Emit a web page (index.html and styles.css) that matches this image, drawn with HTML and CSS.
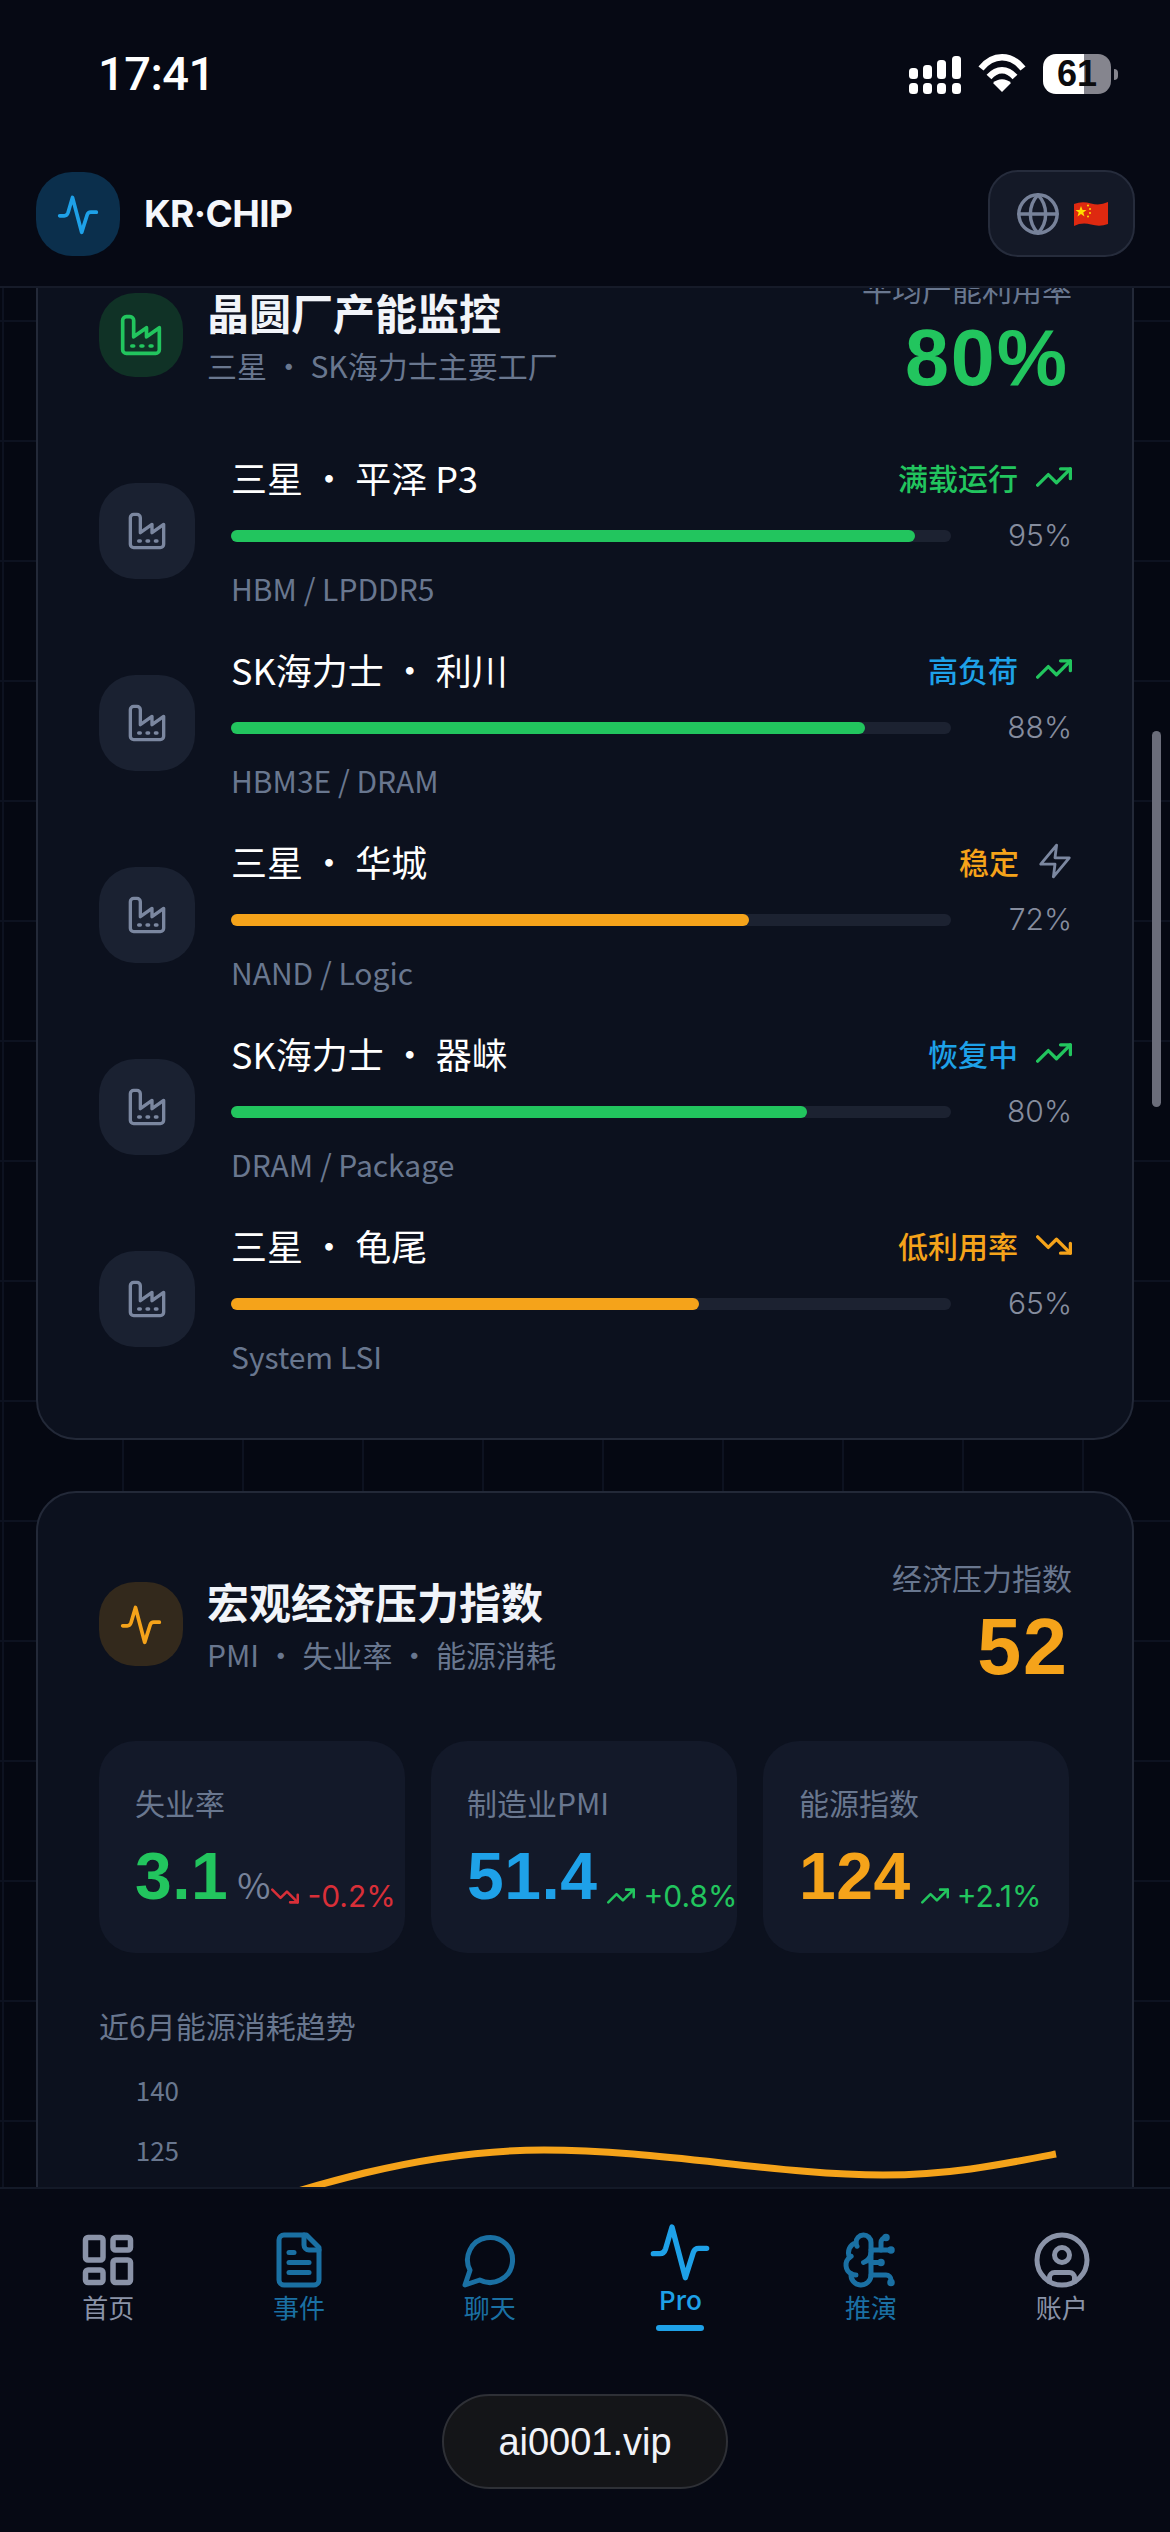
FILE: index.html
```html
<!DOCTYPE html>
<html lang="zh">
<head>
<meta charset="utf-8">
<title>KR·CHIP</title>
<link rel="stylesheet" href="styles.css">
</head>
<body>
<svg class="defs" width="0" height="0" aria-hidden="true">
  <symbol id="i-pulse" viewBox="0 0 24 24"><path d="M2 13h2.5c1 0 1.7-.6 2.1-1.8L9 3l5 19 3-9.5c.3-.9 1-1.5 2-1.5H22"/></symbol>
  <symbol id="i-factory" viewBox="0 0 24 24"><path d="M2 20a2 2 0 0 0 2 2h16a2 2 0 0 0 2-2V8l-7 5V8l-7 5V4a2 2 0 0 0-2-2H4a2 2 0 0 0-2 2Z"/><path d="M17 18h1"/><path d="M12 18h1"/><path d="M7 18h1"/></symbol>
  <symbol id="i-up" viewBox="1 6 22 12"><path d="M22 7 13.500 15.500l-5-5L2 17"/><path d="M16 7h6v6"/></symbol>
  <symbol id="i-down" viewBox="1 6 22 12"><path d="M22 17 13.500 8.500l-5 5L2 7"/><path d="M16 17h6v-6"/></symbol>
  <symbol id="i-zap" viewBox="0 0 24 24"><path d="M13 2 3 14h9l-1 8 10-12h-9l1-8Z"/></symbol>
</svg>

<div class="top">
  <div class="status">
    <span class="clock">17:41</span>
    <div class="status-icons">
      <svg class="signal" width="52" height="38" viewBox="0 0 52 38"><g fill="#fff"><rect x="0" y="27" width="9" height="11" rx="3.500"/><rect x="14" y="27" width="9" height="11" rx="3.500"/><rect x="28" y="27" width="9" height="11" rx="3.500"/><rect x="43" y="27" width="9" height="11" rx="3.500"/><rect x="0" y="12" width="9" height="11" rx="3.500"/><rect x="14" y="9" width="9" height="14" rx="3.500"/><rect x="28" y="4" width="9" height="19" rx="3.500"/><rect x="43" y="0" width="9" height="23" rx="3.500"/></g></svg>
      <svg class="wifi" width="48" height="38" viewBox="0 0 48 38"><g fill="none" stroke="#fff" stroke-width="6.500"><path d="M3 14.500C15-.5 33-.5 45 14.500"/><path d="M11 23c8-9 18-9 26 0"/></g><path fill="#fff" d="M24 38 15 29c5-5 13-5 18 0Z"/></svg>
      <div class="battery"><span class="battery-level">61</span></div>
      <span class="battery-nub"></span>
    </div>
  </div>
  <header class="appbar">
    <div class="brand">
      <span class="logo"><svg class="ico ico-logo"><use href="#i-pulse"/></svg></span>
      <span class="brand-name">KR·CHIP</span>
    </div>
    <div class="lang">
      <svg class="ico ico-globe" viewBox="0 0 24 24"><circle cx="12" cy="12" r="10"/><path d="M12 2a14.500 14.500 0 0 0 0 20 14.500 14.500 0 0 0 0-20"/><path d="M2 12h20"/></svg>
      <svg class="flag" width="36" height="28" viewBox="0 0 36 28"><path fill="#de2910" d="M1 4Q9 1 18 3.500T35 2V24Q27 27 18 24.500T1 26Z"/><polygon fill="#ffde00" points="8,6 9.500,10 13.500,10 10.300,12.500 11.500,16.500 8,14 4.500,16.500 5.700,12.500 2.500,10 6.500,10"/><circle cx="15" cy="5.500" r="1" fill="#ffde00"/><circle cx="17" cy="9" r="1" fill="#ffde00"/><circle cx="17" cy="13" r="1" fill="#ffde00"/><circle cx="15" cy="16.500" r="1" fill="#ffde00"/></svg>
    </div>
  </header>
</div>

<main class="scroller">
  <div class="scroll-thumb"></div>
  <div class="scroll-content">
    <section class="card">
      <div class="card-head">
        <div class="head-left">
          <span class="head-icon head-icon-green"><svg class="ico ico-head"><use href="#i-factory"/></svg></span>
          <div>
            <h2 class="head-title">晶圆厂产能监控</h2>
            <p class="head-sub">三星 · SK海力士主要工厂</p>
          </div>
        </div>
        <div class="head-right">
          <p class="head-label">平均产能利用率</p>
          <p class="head-value c-green">80%</p>
        </div>
      </div>

      <div class="fab">
        <span class="fab-icon"><svg class="ico ico-fab"><use href="#i-factory"/></svg></span>
        <div class="fab-body">
          <div class="fab-top"><span class="fab-name">三星 · 平泽 P3</span><span class="fab-state c-green">满载运行<svg class="ico trend c-green"><use href="#i-up"/></svg></span></div>
          <div class="fab-bar"><div class="track"><div class="fill bg-green" style="width:95%"></div></div><span class="pct">95%</span></div>
          <p class="fab-sub">HBM / LPDDR5</p>
        </div>
      </div>
      <div class="fab">
        <span class="fab-icon"><svg class="ico ico-fab"><use href="#i-factory"/></svg></span>
        <div class="fab-body">
          <div class="fab-top"><span class="fab-name">SK海力士 · 利川</span><span class="fab-state c-blue">高负荷<svg class="ico trend c-green"><use href="#i-up"/></svg></span></div>
          <div class="fab-bar"><div class="track"><div class="fill bg-green" style="width:88%"></div></div><span class="pct">88%</span></div>
          <p class="fab-sub">HBM3E / DRAM</p>
        </div>
      </div>
      <div class="fab">
        <span class="fab-icon"><svg class="ico ico-fab"><use href="#i-factory"/></svg></span>
        <div class="fab-body">
          <div class="fab-top"><span class="fab-name">三星 · 华城</span><span class="fab-state c-orange">稳定<svg class="ico zap"><use href="#i-zap"/></svg></span></div>
          <div class="fab-bar"><div class="track"><div class="fill bg-orange" style="width:72%"></div></div><span class="pct">72%</span></div>
          <p class="fab-sub">NAND / Logic</p>
        </div>
      </div>
      <div class="fab">
        <span class="fab-icon"><svg class="ico ico-fab"><use href="#i-factory"/></svg></span>
        <div class="fab-body">
          <div class="fab-top"><span class="fab-name">SK海力士 · 器崃</span><span class="fab-state c-blue">恢复中<svg class="ico trend c-green"><use href="#i-up"/></svg></span></div>
          <div class="fab-bar"><div class="track"><div class="fill bg-green" style="width:80%"></div></div><span class="pct">80%</span></div>
          <p class="fab-sub">DRAM / Package</p>
        </div>
      </div>
      <div class="fab">
        <span class="fab-icon"><svg class="ico ico-fab"><use href="#i-factory"/></svg></span>
        <div class="fab-body">
          <div class="fab-top"><span class="fab-name">三星 · 龟尾</span><span class="fab-state c-orange">低利用率<svg class="ico trend c-orange"><use href="#i-down"/></svg></span></div>
          <div class="fab-bar"><div class="track"><div class="fill bg-orange" style="width:65%"></div></div><span class="pct">65%</span></div>
          <p class="fab-sub">System LSI</p>
        </div>
      </div>
    </section>

    <section class="card card-macro">
      <div class="card-head">
        <div class="head-left">
          <span class="head-icon head-icon-orange"><svg class="ico ico-head c-orange"><use href="#i-pulse"/></svg></span>
          <div>
            <h2 class="head-title">宏观经济压力指数</h2>
            <p class="head-sub">PMI · 失业率 · 能源消耗</p>
          </div>
        </div>
        <div class="head-right">
          <p class="head-label">经济压力指数</p>
          <p class="head-value c-orange">52</p>
        </div>
      </div>

      <div class="kpis">
        <div class="kpi">
          <p class="kpi-label">失业率</p>
          <div class="kpi-row">
            <span class="kpi-main"><span class="kpi-num c-green">3.1</span><span class="kpi-unit">%</span></span>
            <span class="kpi-delta c-red"><svg class="ico delta-ico"><use href="#i-down"/></svg>-0.2%</span>
          </div>
        </div>
        <div class="kpi">
          <p class="kpi-label">制造业PMI</p>
          <div class="kpi-row">
            <span class="kpi-main"><span class="kpi-num c-blue">51.4</span></span>
            <span class="kpi-delta c-green"><svg class="ico delta-ico"><use href="#i-up"/></svg>+0.8%</span>
          </div>
        </div>
        <div class="kpi">
          <p class="kpi-label">能源指数</p>
          <div class="kpi-row">
            <span class="kpi-main"><span class="kpi-num c-orange">124</span></span>
            <span class="kpi-delta c-green"><svg class="ico delta-ico"><use href="#i-up"/></svg>+2.1%</span>
          </div>
        </div>
      </div>

      <p class="chart-title">近6月能源消耗趋势</p>
      <svg class="chart" width="970" height="200" viewBox="0 0 970 200">
        <text class="axis" x="80" y="40" text-anchor="end">140</text>
        <text class="axis" x="80" y="100" text-anchor="end">125</text>
        <path class="line" d="M90 165C210 125 320 89 445 89C560 89 680 114 784 114C850 114 900 104 957 93"/>
      </svg>
    </section>
  </div>
</main>

<footer class="bottom">
  <nav class="tabs">
    <a class="tab tab-grey"><svg class="ico tab-ico" viewBox="0 0 24 24"><rect x="3" y="3" width="7" height="9" rx="1"/><rect x="14" y="3" width="7" height="5" rx="1"/><rect x="14" y="12" width="7" height="9" rx="1"/><rect x="3" y="16" width="7" height="5" rx="1"/></svg><span>首页</span></a>
    <a class="tab tab-dim"><svg class="ico tab-ico" viewBox="0 0 24 24"><path d="M15 2H6a2 2 0 0 0-2 2v16a2 2 0 0 0 2 2h12a2 2 0 0 0 2-2V7Z"/><path d="M14 2v4a2 2 0 0 0 2 2h4"/><path d="M10 9H8"/><path d="M16 13H8"/><path d="M16 17H8"/></svg><span>事件</span></a>
    <a class="tab tab-dim"><svg class="ico tab-ico" viewBox="0 0 24 24"><path d="M7.900 20A9 9 0 1 0 4 16.100L2 22Z"/></svg><span>聊天</span></a>
    <a class="tab tab-active"><svg class="ico tab-ico"><use href="#i-pulse"/></svg><span>Pro</span><i class="tab-mark"></i></a>
    <a class="tab tab-dim"><svg class="ico tab-ico" viewBox="0 0 24 24"><path d="M12 5a3 3 0 1 0-5.997.125 4 4 0 0 0-2.526 5.770 4 4 0 0 0 .556 6.588A4 4 0 1 0 12 18Z"/><path d="M9 13a4.500 4.500 0 0 0 3-4"/><path d="M6.003 5.125A3 3 0 0 0 6.401 6.500"/><path d="M3.477 10.896a4 4 0 0 1 .585-.396"/><path d="M6 18a4 4 0 0 1-1.967-.516"/><path d="M12 13h4"/><path d="M12 18h6a2 2 0 0 1 2 2v1"/><path d="M12 8h8"/><path d="M16 8V5a2 2 0 0 1 2-2"/><circle cx="16" cy="13" r=".5"/><circle cx="18" cy="3" r=".5"/><circle cx="20" cy="21" r=".5"/><circle cx="20" cy="8" r=".5"/></svg><span>推演</span></a>
    <a class="tab"><svg class="ico tab-ico" viewBox="0 0 24 24"><circle cx="12" cy="12" r="10"/><circle cx="12" cy="10" r="3"/><path d="M7 20.662V19a2 2 0 0 1 2-2h6a2 2 0 0 1 2 2v1.662"/></svg><span>账户</span></a>
  </nav>
  <div class="url-pill">ai0001.vip</div>
</footer>
</body>
</html>
```

FILE: styles.css
```css
* { box-sizing: border-box; }
html, body { margin: 0; padding: 0; }
body {
  width: 1170px;
  height: 2532px;
  overflow: hidden;
  display: flex;
  flex-direction: column;
  background: #050812;
  color: #f1f4f9;
  font-family: "Noto Sans CJK SC", "Noto Sans", sans-serif;
}
p, h2 { margin: 0; }
.defs { position: absolute; }
.ico { fill: none; stroke: currentColor; stroke-width: 2; stroke-linecap: round; stroke-linejoin: round; display: block; flex: none; }

.c-green { color: #22c55e; }
.c-blue { color: #1ea1e8; }
.c-orange { color: #f5a31a; }
.c-red { color: #d92f38; }
.bg-green { background: #22c55e; }
.bg-orange { background: #f5a31a; }

/* top */
.top {
  height: 288px;
  flex: none;
  background: #060914;
  border-bottom: 2px solid #161b29;
}
.status {
  height: 150px;
  padding: 44px 52px 0 98px;
  display: flex;
  justify-content: space-between;
  align-items: flex-start;
}
.clock {
  font: 500 47px/60px "Roboto", "Liberation Sans", sans-serif;
  color: #fff;
  letter-spacing: -.5px;
}
.status-icons { display: flex; align-items: flex-start; padding-top: 10px; }
.signal { margin-top: 2px; margin-right: 17px; }
.wifi { margin-right: 17px; }
.battery {
  width: 68px;
  height: 40px;
  border-radius: 13px;
  background: linear-gradient(90deg, #fff 60%, #85858e 60%);
  color: #0b0b0d;
  display: flex;
  align-items: center;
  justify-content: center;
}
.battery-level { font: 700 36px/40px "Liberation Sans", sans-serif; }
.battery-nub { width: 4px; height: 11px; margin: 15px 0 0 3px; border-radius: 0 4px 4px 0; background: #85858e; }

.appbar {
  height: 87px;
  margin-top: 20px;
  padding: 0 35px 0 36px;
  display: flex;
  justify-content: space-between;
  align-items: center;
}
.brand { display: flex; align-items: center; gap: 24px; }
.logo {
  width: 84px;
  height: 84px;
  border-radius: 36px;
  background: #0b2f4c;
  color: #1ea1e8;
  display: flex;
  align-items: center;
  justify-content: center;
}
.ico-logo { width: 44px; height: 44px; }
.brand-name { font: 700 37px/44px "Inter", "Liberation Sans", sans-serif; letter-spacing: -.6px; color: #f4f6fb; }
.lang {
  width: 147px;
  height: 87px;
  border-radius: 30px;
  background: #141927;
  border: 2px solid #262c3c;
  color: #77829a;
  display: flex;
  align-items: center;
  gap: 12px;
  padding-left: 25px;
}
.ico-globe { width: 46px; height: 46px; stroke-width: 1.800; }

/* scrolling region */
.scroller {
  flex: 1;
  min-height: 0;
  overflow: hidden;
  position: relative;
  background-color: #050812;
  background-image:
    linear-gradient(#0d1220 2px, transparent 2px),
    linear-gradient(90deg, #0d1220 2px, transparent 2px);
  background-size: 120px 120px;
  background-position: 2px 32px;
}
.scroll-thumb {
  position: absolute;
  left: 1152px;
  top: 443px;
  width: 9px;
  height: 376px;
  border-radius: 5px;
  background: #6b6d7a;
  z-index: 2;
}
.scroll-content {
  margin-top: -86px;
  padding: 0 36px;
  display: flex;
  flex-direction: column;
  gap: 51px;
}
.card {
  background: #0c111e;
  border: 2px solid #232938;
  border-radius: 40px;
  padding: 62px 60px 44px 61px;
}
.card-macro { padding-bottom: 0; }

.card-head { display: flex; justify-content: space-between; align-items: center; height: 138px; }
.head-left { display: flex; align-items: center; gap: 24px; }
.head-icon {
  width: 84px;
  height: 84px;
  border-radius: 36px;
  display: flex;
  align-items: center;
  justify-content: center;
}
.head-icon-green { background: #103226; color: #22c55e; }
.head-icon-orange { background: #33291c; }
.ico-head { width: 44px; height: 44px; }
.head-title { font-size: 42px; line-height: 52px; font-weight: 700; color: #f1f4f9; }
.head-sub { font-size: 30px; line-height: 40px; color: #69778f; margin-top: 7px; }
.head-right { text-align: right; }
.head-label { font-size: 30px; line-height: 40px; color: #69778f; margin-bottom: 6px; }
.head-value { font: 700 79px/88px "Liberation Sans", sans-serif; letter-spacing: 2px; margin-right: 3px; }

/* fab rows */
.fab { display: flex; align-items: center; gap: 36px; height: 192px; }
.card-head + .fab { margin-top: 30px; }
.fab-icon {
  width: 96px;
  height: 96px;
  flex: none;
  margin-top: 2px;
  border-radius: 36px;
  background: #1a2131;
  color: #7b87a0;
  display: flex;
  align-items: center;
  justify-content: center;
}
.ico-fab { width: 40px; height: 40px; }
.fab-body { flex: 1; min-width: 0; }
.fab-top { display: flex; justify-content: space-between; align-items: center; height: 48px; }
.fab-name { font-size: 36px; line-height: 48px; font-weight: 400; color: #fff; }
.fab-state { display: flex; align-items: center; gap: 18px; font-size: 30px; line-height: 48px; font-weight: 500; }
.trend { width: 36px; height: 20px; stroke-width: 2; }
.zap { width: 38px; height: 38px; color: #7b87a0; stroke-width: 1.800; margin: 0 -2px 0 -1px; }
.fab-bar { display: flex; align-items: center; height: 36px; margin-top: 17px; }
.track { width: 720px; height: 12px; border-radius: 6px; background: #1c2231; flex: none; }
.fill { height: 100%; border-radius: 6px; }
.pct { flex: 1; margin-top: -2px; text-align: right; font: 300 30px/36px "Inter", sans-serif; color: #868d9e; }
.fab-sub { font-size: 30px; line-height: 40px; color: #69778f; margin-top: 14px; }

/* KPI */
.kpis { display: grid; grid-template-columns: repeat(3, 306px); gap: 26px; margin-top: 48px; }
.kpi { height: 212px; padding: 41px 0 0 36px; border-radius: 36px; background: #131929; }
.kpi-label { font-size: 30px; line-height: 40px; color: #69778f; }
.kpi-row { display: flex; align-items: flex-end; margin-top: 19px; height: 70px; white-space: nowrap; }
.kpi-main { display: flex; align-items: baseline; }
.kpi-num { font: 700 66px/70px "Liberation Sans", sans-serif; letter-spacing: .5px; }
.kpi-unit { font-size: 36px; color: #77829a; margin: 0 -9px 0 9px; line-height: 40px; }
.kpi-delta { display: flex; align-items: center; gap: 8px; font: 400 30px/40px "Inter", sans-serif; margin: 0 0 -5px 10px; }
.delta-ico { width: 28px; height: 16px; stroke-width: 2; }

.chart-title { font-size: 30px; line-height: 40px; color: #69778f; margin-top: 52px; }
.chart { display: block; margin-top: 16px; }
.axis { font-size: 26px; fill: #69778f; }
.line { fill: none; stroke: #f5a31a; stroke-width: 7; stroke-linecap: butt; }

/* bottom */
.bottom {
  flex: none;
  height: 345px;
  background: #060914;
  border-top: 2px solid #141a28;
  display: flex;
  flex-direction: column;
  align-items: center;
}
.tabs {
  width: 100%;
  padding: 30px 13px 0;
  display: grid;
  grid-template-columns: repeat(6, 1fr);
  height: 205px;
}
.tab {
  display: flex;
  flex-direction: column;
  align-items: center;
  padding-top: 11px;
  color: #8a93a8;
  font-size: 26px;
  line-height: 32px;
}
.tab-grey .tab-ico { stroke-width: 2.200; }
.tab-ico { width: 60px; height: 60px; margin-bottom: 1px; }
.tab-dim { color: #1a70a3; }
.tab-active { color: #1ea1e8; padding-top: 0; font-weight: 500; }
.tab-active .tab-ico { width: 64px; height: 64px; margin-bottom: 0; }
.tab-mark { display: block; width: 48px; height: 6px; border-radius: 3px; background: #1ea1e8; margin-top: 10px; }
.url-pill {
  width: 286px;
  height: 95px;
  border-radius: 48px;
  background: #141518;
  border: 2px solid #2e3036;
  display: flex;
  align-items: center;
  justify-content: center;
  font: 400 38px/48px "Liberation Sans", sans-serif;
  color: #f1f3f8;
}
```
